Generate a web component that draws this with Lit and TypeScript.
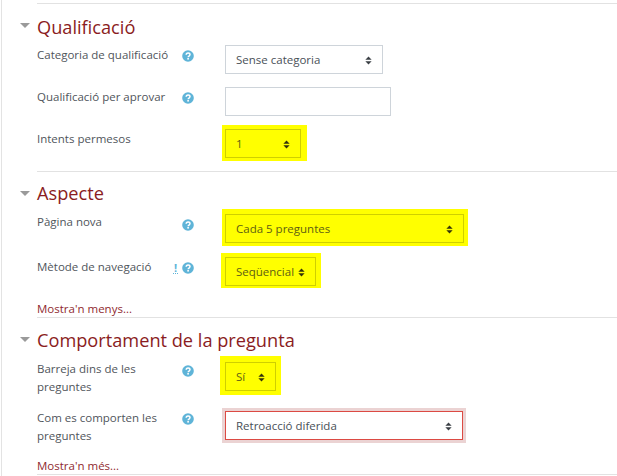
import { LitElement, html, css } from 'lit';
import { customElement } from 'lit/decorators.js';

const helpIcon = html`
  <svg class="help" viewBox="0 0 12 12" width="12" height="12">
    <circle cx="6" cy="6" r="5.8" fill="#5fb4d8"></circle>
    <path d="M4.2 4.8c0-1.2.8-1.9 1.9-1.9s1.9.7 1.9 1.7c0 1.5-1.8 1.4-1.8 2.6" fill="none" stroke="#fff" stroke-width="1.5"></path>
    <rect x="5.3" y="8" width="1.6" height="1.6" fill="#fff"></rect>
  </svg>
`;

const caret = html`
  <svg class="caret" viewBox="0 0 8 10" width="7" height="9">
    <path d="M4 0.5 7.6 4.2H0.4zM4 9.5 0.4 5.8H7.6z" fill="currentColor"></path>
  </svg>
`;

@customElement('app-root')
export class AppRoot extends LitElement {
  static styles = css`
    :host {
      display: block;
      width: 616px;
      height: 476px;
      overflow: hidden;
      background: #fff;
      box-sizing: border-box;
      border-left: 1px solid #e3e3e3;
      margin-left: 1px;
      font-family: "Open Sans", "Noto Sans", sans-serif;
      font-size: 11.5px;
      color: #50555b;
    }

    .page {
      padding: 3px 0 0 35px;
    }

    section {
      position: relative;
      box-sizing: border-box;
      border-top: 1px solid #e2e2e2;
    }

    .tri {
      position: absolute;
      left: -17px;
      top: 19px;
      width: 0;
      height: 0;
      border-left: 5px solid transparent;
      border-right: 5px solid transparent;
      border-top: 5px solid #9a9a9a;
    }

    h3 {
      margin: 0;
      font-size: 18.2px;
      font-weight: 400;
      line-height: 26px;
      color: #8a1c22;
    }

    .q { padding-top: 10px; height: 168px; }
    .a { padding-top: 8px; height: 146px; }
    .c { padding-top: 9px; height: 158px; border-bottom: 1px solid #e2e2e2; }

    .row {
      --label-top: 1px;
      --help-top: 5px;
      display: grid;
      grid-template-columns: 145px 43px 1fr;
      align-items: start;
      line-height: 18px;
      margin-top: 13px;
    }

    .row.first-q { margin-top: 5px; }
    .row.first-a { margin-top: 8px; --label-top: -1px; }
    .row.second-a { margin-top: 14px; }
    .row.wrapped { --label-top: -2px; --help-top: 3px; }
    .row.first-c { margin-top: 9px; }
    .row.second-c { margin-top: 15px; --help-top: 2px; }

    .label { margin-top: var(--label-top); }
    .help { display: block; margin-top: var(--help-top); }
    .help-cell { position: relative; }

    .warn {
      position: absolute;
      left: -9px;
      top: 6px;
      width: 5px;
      height: 10px;
      text-align: center;
      color: #5fb4d8;
      font-weight: 700;
      font-size: 11px;
      line-height: 10px;
      border-bottom: 1px dotted #5fb4d8;
    }

    .select, .input {
      display: flex;
      align-items: center;
      justify-content: space-between;
      height: 29px;
      box-sizing: border-box;
      padding: 1px 10px 0 10px;
      border: 1px solid #ced4da;
      background: #fff;
      color: #495057;
      line-height: 1;
    }

    .caret { color: #3a3f44; flex: none; }

    .w51 { width: 51px; }
    .w76 { width: 76px; }
    .w91 { width: 91px; }
    .w158 { width: 158px; }
    .w166 { width: 166px; }
    .w238 { width: 238px; }
    .w239 { width: 239px; }

    .hl {
      width: fit-content;
      background: #ffff00;
    }
    .hl .select {
      background: #ffff00;
      border-color: #cfcf00;
      color: #5e5e14;
    }
    .hl .caret { color: #33330a; }

    .hl-attempts { margin: -4px 0 -3px -3px; padding: 4px 6px 3px 3px; }
    .hl-page { margin: -5px 0 -3px -3px; padding: 5px 4px 3px 3px; }
    .hl-nav { margin: -4px 0 -2px -4px; padding: 4px 5px 2px 4px; }
    .hl-shuffle { margin: -6px 0 -4px -5px; padding: 6px 5px 4px 5px; }

    .invalid {
      border-color: #dc4a43;
      box-shadow: 0 0 0 3px #ebd3d3;
    }

    .more {
      color: #8f2a30;
      line-height: 16px;
    }
    .more.less { margin-top: 15px; }
    .more.extra { margin-top: 13px; }
  `;

  render() {
    return html`
      <div class="page">
        <section class="q">
          <span class="tri"></span>
          <h3>Qualificació</h3>
          <div class="row first-q">
            <div class="label">Categoria de qualificació</div>
            <div class="help-cell">${helpIcon}</div>
            <div class="select w158">Sense categoria ${caret}</div>
          </div>
          <div class="row">
            <div class="label">Qualificació per aprovar</div>
            <div class="help-cell">${helpIcon}</div>
            <div class="input w166"></div>
          </div>
          <div class="row">
            <div class="label">Intents permesos</div>
            <div></div>
            <div class="hl hl-attempts"><div class="select w76">1 ${caret}</div></div>
          </div>
        </section>
        <section class="a">
          <span class="tri"></span>
          <h3>Aspecte</h3>
          <div class="row first-a">
            <div class="label">Pàgina nova</div>
            <div class="help-cell">${helpIcon}</div>
            <div class="hl hl-page"><div class="select w239">Cada 5 preguntes ${caret}</div></div>
          </div>
          <div class="row second-a">
            <div class="label">Mètode de navegació</div>
            <div class="help-cell"><span class="warn">!</span>${helpIcon}</div>
            <div class="hl hl-nav"><div class="select w91">Seqüencial ${caret}</div></div>
          </div>
          <div class="more less">Mostra'n menys...</div>
        </section>
        <section class="c">
          <span class="tri"></span>
          <h3>Comportament de la pregunta</h3>
          <div class="row wrapped first-c">
            <div class="label">Barreja dins de les<br />preguntes</div>
            <div class="help-cell">${helpIcon}</div>
            <div class="hl hl-shuffle"><div class="select w51">Sí ${caret}</div></div>
          </div>
          <div class="row wrapped second-c">
            <div class="label">Com es comporten les<br />preguntes</div>
            <div class="help-cell">${helpIcon}</div>
            <div class="select invalid w238">Retroacció diferida ${caret}</div>
          </div>
          <div class="more extra">Mostra'n més...</div>
        </section>
      </div>
    `;
  }
}
